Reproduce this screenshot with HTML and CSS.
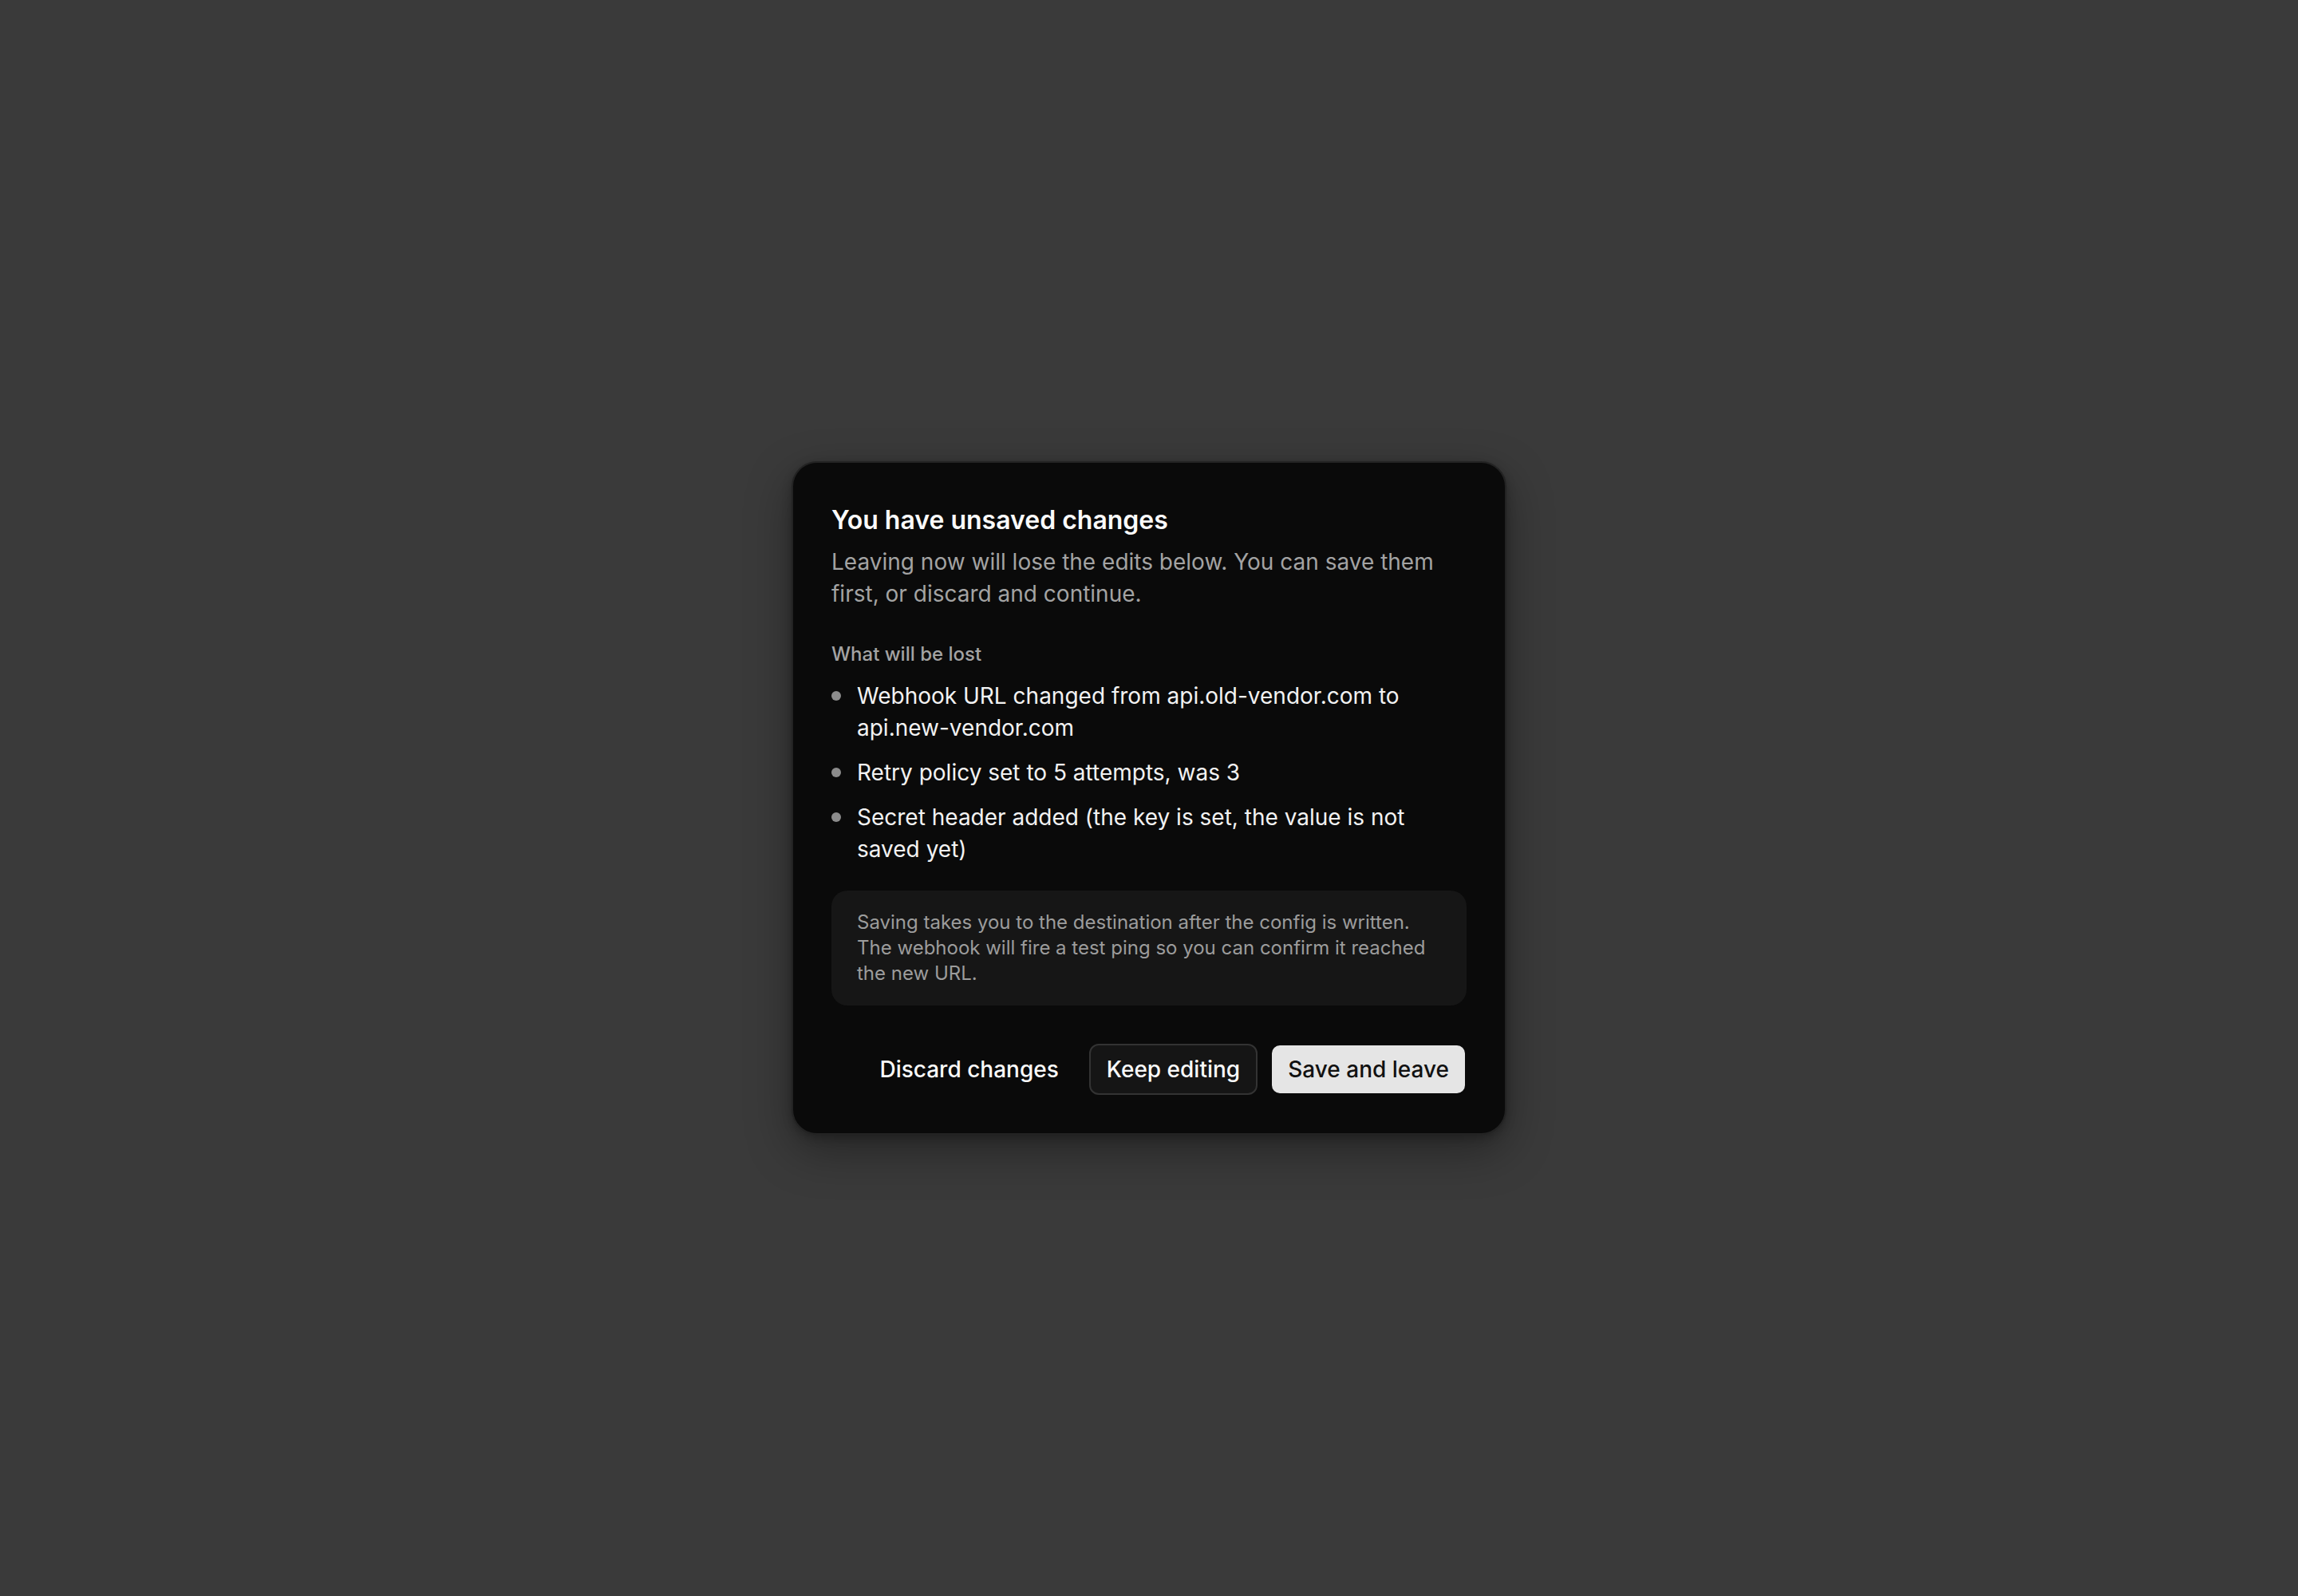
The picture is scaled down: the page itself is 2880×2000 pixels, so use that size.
FILE: index.html
```html
<!DOCTYPE html>
<html lang="en">
<head>
<meta charset="utf-8">
<title>Unsaved changes</title>
<link rel="stylesheet" href="styles.css">
</head>
<body>
<div class="overlay">
  <div class="dialog" role="dialog" aria-labelledby="dlg-title">
    <h2 class="title" id="dlg-title">You have unsaved changes</h2>
    <p class="desc">Leaving now will lose the edits below. You can save them first, or discard and continue.</p>
    <div class="section">
      <div class="label">What will be lost</div>
      <ul class="list">
        <li class="item"><span class="dot"></span><span>Webhook URL changed from api.old-vendor.com to api.new-vendor.com</span></li>
        <li class="item"><span class="dot"></span><span>Retry policy set to 5 attempts, was 3</span></li>
        <li class="item"><span class="dot"></span><span>Secret header added (the key is set, the value is not saved yet)</span></li>
      </ul>
    </div>
    <div class="note">Saving takes you to the destination after the config is written. The webhook will fire a test ping so you can confirm it reached the new URL.</div>
    <div class="actions">
      <button class="btn btn-ghost">Discard changes</button>
      <button class="btn btn-outline">Keep editing</button>
      <button class="btn btn-primary">Save and leave</button>
    </div>
  </div>
</div>
</body>
</html>
```
FILE: styles.css
```css
* { box-sizing: border-box; }
html, body { margin: 0; padding: 0; }
body {
  background: #3a3a3a;
  font-family: Inter, "Noto Sans", "Liberation Sans", sans-serif;
  -webkit-font-smoothing: antialiased;
}
.overlay {
  min-height: 100vh;
  display: flex;
  align-items: center;
  justify-content: center;
}
.dialog {
  width: 896px;
  background: #0a0a0a;
  border: 2px solid #232323;
  border-radius: 32px;
  padding: 48px;
  box-shadow: 0 20px 56px rgba(0, 0, 0, 0.35), 0 4px 12px rgba(0, 0, 0, 0.25);
}
.title {
  margin: 0;
  font-size: 32px;
  line-height: 48px;
  font-weight: 600;
  color: #fafafa;
}
.desc {
  margin: 8px 0 0;
  font-size: 28px;
  line-height: 40px;
  color: #a3a3a3;
}
.section { margin-top: 40px; }
.label {
  font-size: 24px;
  line-height: 32px;
  font-weight: 500;
  color: #a3a3a3;
}
.list {
  list-style: none;
  margin: 16px 0 0;
  padding: 0;
  display: flex;
  flex-direction: column;
  gap: 16px;
}
.item {
  display: flex;
  align-items: flex-start;
  gap: 20px;
  font-size: 28px;
  line-height: 40px;
  color: #f2f2f2;
}
.dot {
  flex-shrink: 0;
  width: 12px;
  height: 12px;
  margin-top: 14px;
  border-radius: 50%;
  background: #8c8c8c;
}
.note {
  margin-top: 32px;
  background: #161616;
  border-radius: 20px;
  padding: 24px 32px;
  font-size: 24px;
  line-height: 32px;
  color: #9c9c9c;
}
.actions {
  margin-top: 48px;
  display: flex;
  justify-content: flex-end;
  gap: 16px;
}
.btn {
  height: 64px;
  padding: 0 20px;
  border: 2px solid transparent;
  border-radius: 12px;
  font-family: inherit;
  font-size: 28px;
  font-weight: 500;
  line-height: 40px;
  cursor: pointer;
}
.btn-ghost {
  background: transparent;
  color: #fafafa;
}
.btn-outline {
  background: #151515;
  border-color: #333333;
  color: #fafafa;
}
.btn-primary {
  background: #e5e5e5;
  border-color: #0a0a0a;
  color: #111111;
}
```
